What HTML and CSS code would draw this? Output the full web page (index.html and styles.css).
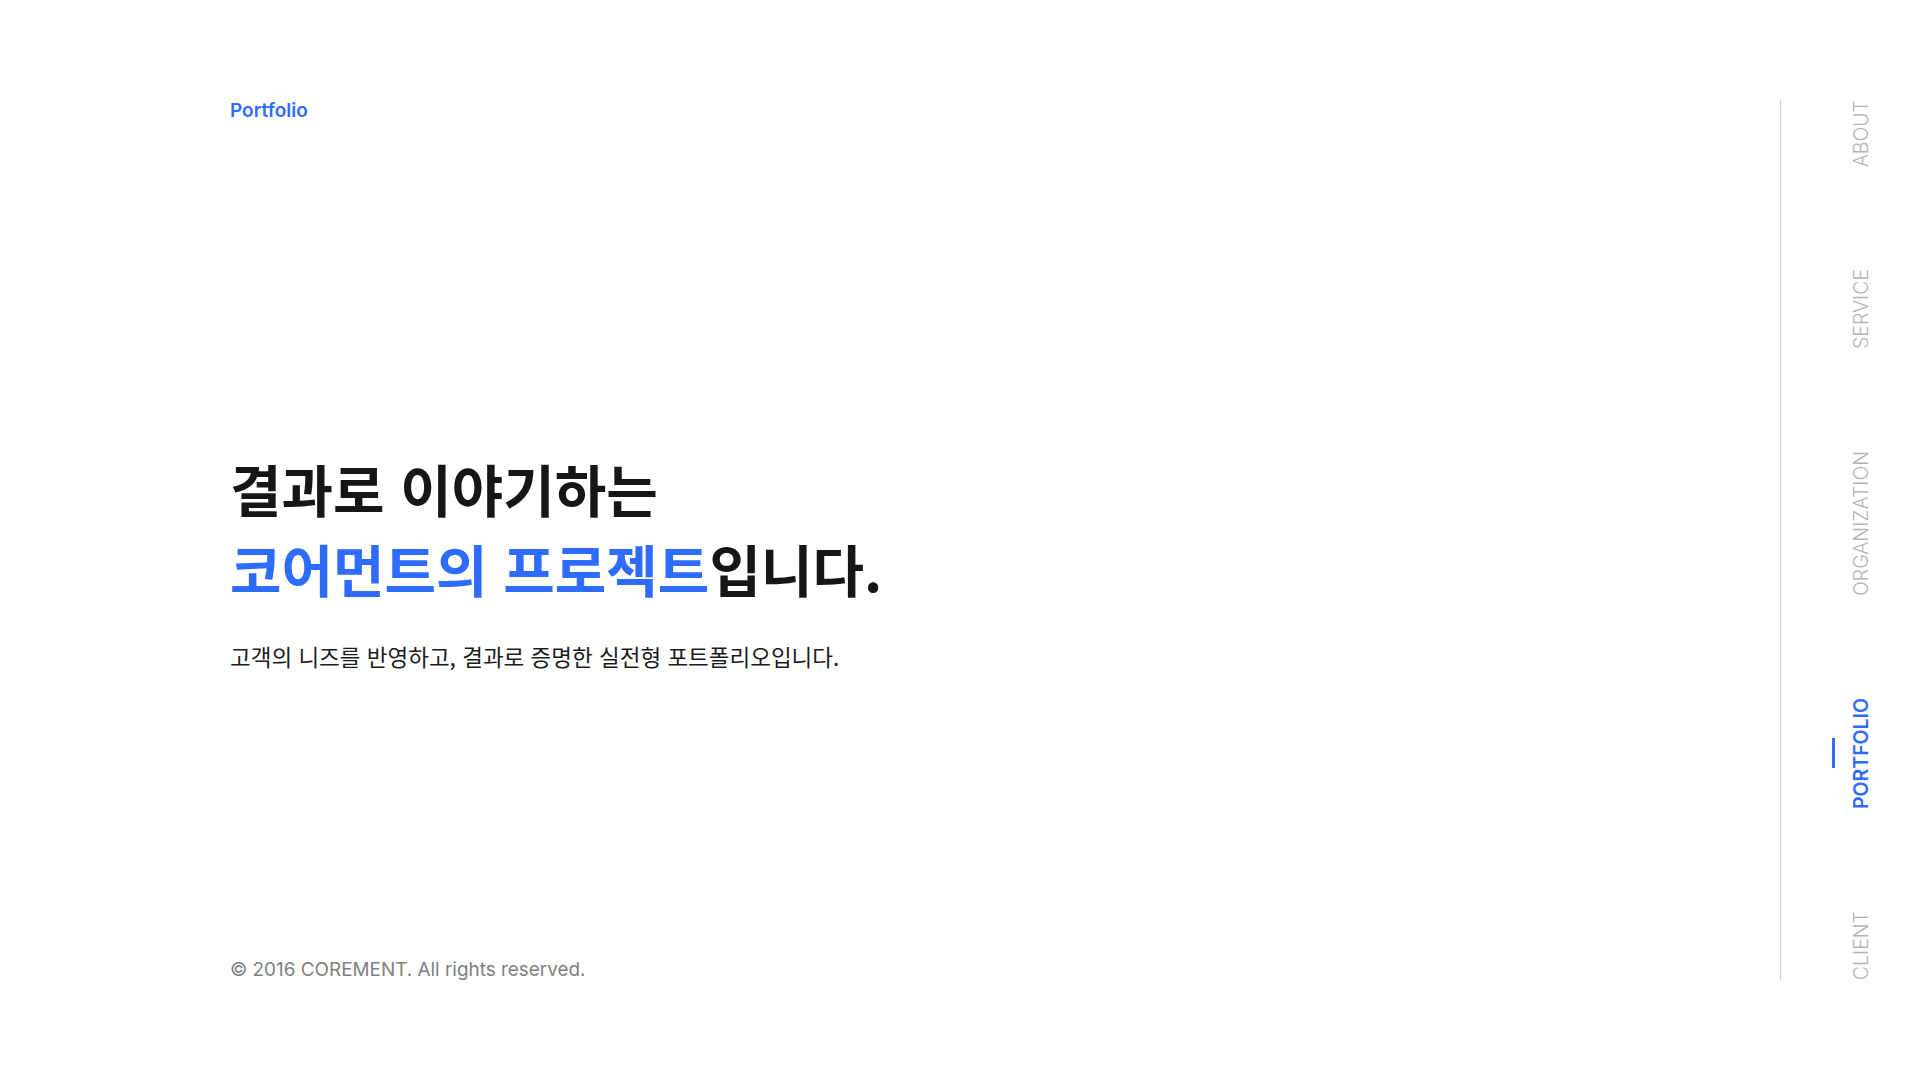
FILE: index.html
```html
<!DOCTYPE html>
<html lang="ko">
<head>
<meta charset="utf-8">
<title>Portfolio</title>
<link rel="stylesheet" href="styles.css">
</head>
<body>
<div class="page">
  <main class="main">
    <p class="eyebrow">Portfolio</p>
    <section class="hero">
      <h1 class="title">결과로 이야기하는<br><span class="accent">코어먼트의 프로젝트</span>입니다.</h1>
      <p class="lead">고객의 니즈를 반영하고, 결과로 증명한 실전형 포트폴리오입니다.</p>
    </section>
    <footer class="copy">© 2016 COREMENT. All rights reserved.</footer>
  </main>
  <nav class="side">
    <ul class="side-list">
      <li class="side-item"><span class="side-label">ABOUT</span></li>
      <li class="side-item"><span class="side-label">SERVICE</span></li>
      <li class="side-item"><span class="side-label">ORGANIZATION</span></li>
      <li class="side-item is-active"><span class="side-label">PORTFOLIO</span></li>
      <li class="side-item"><span class="side-label">CLIENT</span></li>
    </ul>
  </nav>
</div>
</body>
</html>
```

FILE: styles.css
```css
html, body {
  margin: 0;
  padding: 0;
  background: #ffffff;
}

body {
  font-family: "Inter", "Noto Sans CJK KR", sans-serif;
}

.page {
  display: flex;
  height: 1080px;
  padding: 100px 0;
  box-sizing: border-box;
}

.main {
  flex: 1;
  display: flex;
  flex-direction: column;
  padding-left: 230px;
}

.eyebrow {
  margin: 1px 0 0;
  font-family: "Inter", sans-serif;
  font-size: 19px;
  font-weight: 600;
  line-height: 1;
  color: #2e6bff;
}

.hero {
  margin-top: 328px;
}

.title {
  margin: 0;
  font-family: "Noto Sans CJK KR", sans-serif;
  font-size: 56px;
  font-weight: 700;
  line-height: 80px;
  color: #161616;
}

.accent {
  color: #2e6bff;
}

.lead {
  margin: 32px 0 0;
  font-family: "Noto Sans CJK KR", sans-serif;
  font-size: 22.5px;
  font-weight: 400;
  line-height: 32px;
  color: #1c1c1c;
}

.copy {
  margin-top: auto;
  font-family: "Inter", sans-serif;
  font-size: 18.9px;
  font-weight: 400;
  line-height: 1;
  color: #808080;
}

.side {
  width: 140px;
  box-sizing: border-box;
  border-left: 1px solid #cfcfcf;
  padding-left: 70px;
}

.side-list {
  margin: 0;
  padding: 0;
  list-style: none;
  height: 100%;
  display: flex;
  flex-direction: column;
  justify-content: space-between;
  align-items: flex-start;
}

.side-item {
  position: relative;
  width: 20px;
}

.side-label {
  display: block;
  writing-mode: vertical-rl;
  transform: rotate(180deg);
  font-family: "Inter", sans-serif;
  font-size: 19.5px;
  font-weight: 300;
  line-height: 20px;
  color: #b4b4b4;
  white-space: nowrap;
}

.is-active .side-label {
  color: #2e6bff;
  font-weight: 600;
}

.is-active::before {
  content: "";
  position: absolute;
  left: -19px;
  top: 50%;
  width: 3px;
  height: 30px;
  margin-top: -15px;
  background: #2e6bff;
}
```
